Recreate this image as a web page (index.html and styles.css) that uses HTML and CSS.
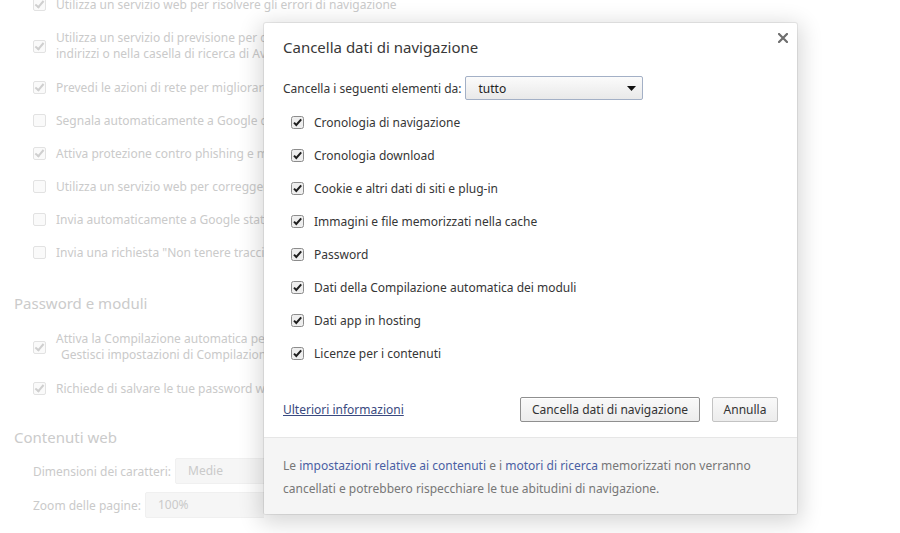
FILE: index.html
```html
<!DOCTYPE html>
<html lang="it">
<head>
<meta charset="utf-8">
<title>Cancella dati di navigazione</title>
<link rel="stylesheet" href="styles.css">
</head>
<body>
<div class="page">
  <div class="list first">
    <div class="opt wide"><span class="cb on"></span><span>Utilizza un servizio web per risolvere gli errori di navigazione</span></div>
    <div class="opt"><span class="cb on"></span><span class="txt">Utilizza un servizio di previsione per completare le ricerche e gli URL digitati nella barra degli<br>indirizzi o nella casella di ricerca di Avvio applicazioni</span></div>
    <div class="opt"><span class="cb on"></span><span>Prevedi le azioni di rete per migliorare il rendimento del caricamento delle pagine</span></div>
    <div class="opt"><span class="cb"></span><span>Segnala automaticamente a Google dettagli di possibili problemi di sicurezza</span></div>
    <div class="opt"><span class="cb on"></span><span>Attiva protezione contro phishing e malware</span></div>
    <div class="opt"><span class="cb"></span><span>Utilizza un servizio web per correggere gli errori ortografici</span></div>
    <div class="opt"><span class="cb"></span><span>Invia automaticamente a Google statistiche sull'utilizzo e rapporti sugli arresti anomali</span></div>
    <div class="opt"><span class="cb"></span><span>Invia una richiesta "Non tenere traccia" con il tuo traffico di navigazione</span></div>
  </div>
  <h3 class="sec">Password e moduli</h3>
  <div class="list">
    <div class="opt"><span class="cb on"></span><span class="txt">Attiva la Compilazione automatica per compilare i moduli web con un solo clic.<br><span class="sub">Gestisci impostazioni di Compilazione automatica</span></span></div>
    <div class="opt"><span class="cb on"></span><span>Richiede di salvare le tue password web</span></div>
  </div>
  <h3 class="sec sec2">Contenuti web</h3>
  <div class="list">
    <div class="field"><span>Dimensioni dei caratteri:</span><span class="bgsel w1">Medie</span></div>
    <div class="field"><span>Zoom delle pagine:</span><span class="bgsel w2">100%</span></div>
  </div>
</div>

<div class="dialog">
  <div class="head">
    <h1 class="title">Cancella dati di navigazione</h1>
    <span class="close"><svg width="10" height="10" viewBox="0 0 10 10"><path d="M1 1L9 9M9 1L1 9" stroke="#6e6e6e" stroke-width="2.2" stroke-linecap="square"/></svg></span>
  </div>
  <div class="body">
    <div class="period">
      <span>Cancella i seguenti elementi da:</span>
      <span class="select"><span>tutto</span><svg width="9" height="5" viewBox="0 0 9 5"><path d="M0 0H9L4.5 5Z" fill="#111"/></svg></span>
    </div>
    <div class="items">
      <label class="item"><svg class="chk" width="13" height="13" viewBox="0 0 13 13"><rect x="0.5" y="0.5" width="12" height="12" rx="2" fill="#eeeeee" stroke="#8c8c8c"/><path d="M3 6.6L5.3 9L10.2 3.4" fill="none" stroke="#1e1e1e" stroke-width="2"/></svg><span>Cronologia di navigazione</span></label>
      <label class="item"><svg class="chk" width="13" height="13" viewBox="0 0 13 13"><rect x="0.5" y="0.5" width="12" height="12" rx="2" fill="#eeeeee" stroke="#8c8c8c"/><path d="M3 6.6L5.3 9L10.2 3.4" fill="none" stroke="#1e1e1e" stroke-width="2"/></svg><span>Cronologia download</span></label>
      <label class="item"><svg class="chk" width="13" height="13" viewBox="0 0 13 13"><rect x="0.5" y="0.5" width="12" height="12" rx="2" fill="#eeeeee" stroke="#8c8c8c"/><path d="M3 6.6L5.3 9L10.2 3.4" fill="none" stroke="#1e1e1e" stroke-width="2"/></svg><span>Cookie e altri dati di siti e plug-in</span></label>
      <label class="item"><svg class="chk" width="13" height="13" viewBox="0 0 13 13"><rect x="0.5" y="0.5" width="12" height="12" rx="2" fill="#eeeeee" stroke="#8c8c8c"/><path d="M3 6.6L5.3 9L10.2 3.4" fill="none" stroke="#1e1e1e" stroke-width="2"/></svg><span>Immagini e file memorizzati nella cache</span></label>
      <label class="item"><svg class="chk" width="13" height="13" viewBox="0 0 13 13"><rect x="0.5" y="0.5" width="12" height="12" rx="2" fill="#eeeeee" stroke="#8c8c8c"/><path d="M3 6.6L5.3 9L10.2 3.4" fill="none" stroke="#1e1e1e" stroke-width="2"/></svg><span>Password</span></label>
      <label class="item"><svg class="chk" width="13" height="13" viewBox="0 0 13 13"><rect x="0.5" y="0.5" width="12" height="12" rx="2" fill="#eeeeee" stroke="#8c8c8c"/><path d="M3 6.6L5.3 9L10.2 3.4" fill="none" stroke="#1e1e1e" stroke-width="2"/></svg><span>Dati della Compilazione automatica dei moduli</span></label>
      <label class="item"><svg class="chk" width="13" height="13" viewBox="0 0 13 13"><rect x="0.5" y="0.5" width="12" height="12" rx="2" fill="#eeeeee" stroke="#8c8c8c"/><path d="M3 6.6L5.3 9L10.2 3.4" fill="none" stroke="#1e1e1e" stroke-width="2"/></svg><span>Dati app in hosting</span></label>
      <label class="item"><svg class="chk" width="13" height="13" viewBox="0 0 13 13"><rect x="0.5" y="0.5" width="12" height="12" rx="2" fill="#eeeeee" stroke="#8c8c8c"/><path d="M3 6.6L5.3 9L10.2 3.4" fill="none" stroke="#1e1e1e" stroke-width="2"/></svg><span>Licenze per i contenuti</span></label>
    </div>
    <div class="actions">
      <a class="more" href="#">Ulteriori informazioni</a>
      <span class="btn default">Cancella dati di navigazione</span>
      <span class="btn">Annulla</span>
    </div>
  </div>
  <div class="foot">
    Le <a href="#">impostazioni relative ai contenuti</a> e i <a href="#">motori di ricerca</a> memorizzati non verranno<br>cancellati e potrebbero rispecchiare le tue abitudini di navigazione.
  </div>
</div>
</body>
</html>
```

FILE: styles.css
```css
html, body {
  margin: 0;
  background: #ffffff;
  height: 533px;
  overflow: hidden;
}
body {
  position: relative;
  font-family: "Segoe UI", "Noto Sans", "Open Sans", sans-serif;
}
.page {
  padding-left: 14px;
  color: #cacaca;
  font-size: 12px;
  height: 533px;
  overflow: hidden;
}
.list {
  padding-left: 19px;
}
.list.first {
  margin-top: -12px;
}
.opt {
  display: flex;
  align-items: center;
  gap: 10px;
  padding: 8.5px 0;
  line-height: 16px;
  white-space: nowrap;
  max-width: 231px;
  overflow: hidden;
}
.opt.wide {
  max-width: none;
}
.opt .txt {
  line-height: 16.5px;
}
.sub {
  padding-left: 5px;
}
.cb {
  flex: none;
  box-sizing: border-box;
  width: 13px;
  height: 13px;
  border: 1px solid #e2e2e2;
  border-radius: 2px;
  background: #fafafa;
  position: relative;
}
.cb.on::after {
  content: "";
  position: absolute;
  left: 3px;
  top: 0px;
  width: 3px;
  height: 7px;
  border: solid #cfcfcf;
  border-width: 0 2px 2px 0;
  transform: rotate(40deg);
}
.sec {
  margin: 24px 0 9px;
  font-size: 15px;
  font-weight: normal;
  line-height: 20px;
  color: #cbcbcb;
}
.sec.sec2 {
  margin: 22px 0 7px;
}
.field {
  display: flex;
  align-items: center;
  gap: 4px;
  height: 34px;
  white-space: nowrap;
  max-width: 231px;
  overflow: hidden;
}
.bgsel {
  flex: none;
  box-sizing: border-box;
  height: 26px;
  line-height: 24px;
  padding-left: 12px;
  background: #f6f6f6;
  border: 1px solid #f0f0f0;
  border-radius: 2px;
}
.bgsel.w1 { width: 120px; }
.bgsel.w2 { width: 150px; }

/* dialog */
.dialog {
  position: absolute;
  left: 264px;
  top: 23px;
  width: 533px;
  background: #ffffff;
  border-radius: 2px;
  color: #363636;
  font-size: 12px;
  box-shadow: 0 0 0 1px rgba(0,0,0,0.07), 0 5px 22px 4px rgba(0,0,0,0.16);
}
.head {
  position: relative;
  padding: 14px 19px 0;
}
.title {
  margin: 0;
  font-size: 15px;
  font-weight: normal;
  line-height: 20px;
  color: #383838;
}
.close {
  position: absolute;
  top: 10px;
  right: 9px;
  display: flex;
}
.body {
  padding: 19px 19px 15px;
}
.period {
  display: flex;
  align-items: center;
  gap: 4px;
  height: 24px;
  white-space: nowrap;
}
.select {
  box-sizing: border-box;
  width: 178px;
  height: 24px;
  display: flex;
  align-items: center;
  justify-content: space-between;
  padding: 0 6px 0 12px;
  border: 1px solid #a3b0c6;
  border-radius: 2px;
  background: linear-gradient(#fbfbfb, #e9e9e9);
  color: #222;
}
.items {
  margin-top: 6px;
  padding-left: 8px;
}
.item {
  display: flex;
  align-items: center;
  gap: 10px;
  height: 33px;
}
.chk {
  flex: none;
}
.actions {
  display: flex;
  align-items: center;
  margin-top: 27px;
  height: 25px;
}
.more {
  color: #3a4a80;
  text-decoration: underline;
  margin-right: auto;
}
.btn {
  box-sizing: border-box;
  height: 25px;
  line-height: 23px;
  padding: 0 10px;
  border: 1px solid #c3c3c3;
  border-radius: 2px;
  background: linear-gradient(#f9f9f9, #ececec);
  color: #333;
  margin-left: 12px;
  white-space: nowrap;
}
.btn.default {
  width: 180px;
  text-align: center;
  border-color: #8f8f8f;
  box-shadow: inset 0 1px 0 #ffffff;
}
.btn:last-child {
  width: 66px;
  text-align: center;
}
.foot {
  border-top: 1px solid #e6e6e6;
  background: #f5f5f5;
  padding: 16px 19px 14px;
  line-height: 23px;
  color: #777777;
  border-radius: 0 0 2px 2px;
}
.foot a {
  color: #4a5fa3;
  text-decoration: none;
}
```
